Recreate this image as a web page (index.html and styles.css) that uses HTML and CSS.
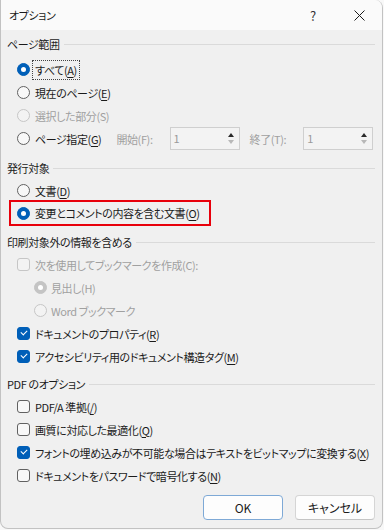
FILE: index.html
```html
<!DOCTYPE html>
<html lang="ja">

<head>
    <meta charset="UTF-8">
    <meta name="viewport" content="width=device-width, initial-scale=1.0">
    <title>オプション</title>
    <link rel="stylesheet" href="styles.css">
</head>

<body>
    <div class="window">
        <div class="titlebar">
            <span class="title">オプション</span>
            <span class="tb-btn help">?</span>
            <span class="tb-btn close">
                <svg width="11" height="11" viewBox="0 0 11 11">
                    <path d="M0.5 0.5 L10.5 10.5 M10.5 0.5 L0.5 10.5" stroke="#1b1b1b" stroke-width="1" fill="none" />
                </svg>
            </span>
        </div>

        <div class="content">
            <!-- page range -->
            <div class="group first">
                <div class="group-head">ページ範囲</div>
                <div class="row">
                    <span class="radio checked"></span>
                    <span class="txt focus">すべて(<u>A</u>)</span>
                </div>
                <div class="row">
                    <span class="radio"></span>
                    <span class="txt">現在のページ(<u>E</u>)</span>
                </div>
                <div class="row disabled">
                    <span class="radio"></span>
                    <span class="txt">選択した部分(S)</span>
                </div>
                <div class="row">
                    <span class="radio"></span>
                    <span class="txt">ページ指定(<u>G</u>)</span>
                    <span class="spin-label from">開始(F):</span>
                    <div class="spin">
                        <span class="spin-val">1</span>
                        <span class="spin-btns"><i class="up"></i><i class="down"></i></span>
                    </div>
                    <span class="spin-label to">終了(T):</span>
                    <div class="spin">
                        <span class="spin-val">1</span>
                        <span class="spin-btns"><i class="up"></i><i class="down"></i></span>
                    </div>
                </div>
            </div>

            <!-- publish what -->
            <div class="group">
                <div class="group-head">発行対象</div>
                <div class="row">
                    <span class="radio"></span>
                    <span class="txt">文書(<u>D</u>)</span>
                </div>
                <div class="row marked">
                    <span class="radio checked"></span>
                    <span class="txt">変更とコメントの内容を含む文書(<u>O</u>)</span>
                </div>
            </div>

            <!-- non printing info -->
            <div class="group">
                <div class="group-head">印刷対象外の情報を含める</div>
                <div class="row disabled">
                    <span class="check"></span>
                    <span class="txt">次を使用してブックマークを作成(C):</span>
                </div>
                <div class="row indent disabled">
                    <span class="radio checked"></span>
                    <span class="txt">見出し(H)</span>
                </div>
                <div class="row indent disabled">
                    <span class="radio"></span>
                    <span class="txt">Word ブックマーク</span>
                </div>
                <div class="row">
                    <span class="check checked"></span>
                    <span class="txt">ドキュメントのプロパティ(<u>R</u>)</span>
                </div>
                <div class="row">
                    <span class="check checked"></span>
                    <span class="txt">アクセシビリティ用のドキュメント構造タグ(<u>M</u>)</span>
                </div>
            </div>

            <!-- pdf options -->
            <div class="group pdf">
                <div class="group-head">PDF のオプション</div>
                <div class="row">
                    <span class="check"></span>
                    <span class="txt">PDF/A 準拠(<u>/</u>)</span>
                </div>
                <div class="row">
                    <span class="check"></span>
                    <span class="txt">画質に対応した最適化(<u>Q</u>)</span>
                </div>
                <div class="row">
                    <span class="check checked"></span>
                    <span class="txt">フォントの埋め込みが不可能な場合はテキストをビットマップに変換する(<u>X</u>)</span>
                </div>
                <div class="row">
                    <span class="check"></span>
                    <span class="txt">ドキュメントをパスワードで暗号化する(<u>N</u>)</span>
                </div>
            </div>
        </div>

        <div class="footer">
            <button class="btn default">OK</button>
            <button class="btn">キャンセル</button>
        </div>
    </div>
</body>

</html>
```

FILE: styles.css
```css
body {
    margin: 0;
    background-color: #f8f8f8;
    font-family: "Noto Sans CJK JP", "Noto Sans", sans-serif;
    font-size: 11px;
    letter-spacing: -0.4px;
    font-feature-settings: "palt";
    color: #1b1b1b;
}

.window {
    width: 383px;
    height: 529px;
    box-sizing: border-box;
    background: #f0f0f0;
    border: 1px solid #c2c2c2;
    border-top: none;
    border-radius: 0 8px 8px 8px;
    display: flex;
    flex-direction: column;
    overflow: hidden;
}

.titlebar {
    height: 30px;
    background: #fafafa;
    display: flex;
    align-items: center;
    padding-left: 8px;
}

.title {
    flex: 1;
}

.tb-btn {
    width: 46px;
    height: 30px;
    display: flex;
    align-items: center;
    justify-content: center;
}

.help {
    font-size: 13px;
    color: #333;
}

.content {
    padding: 0 6px 0 6px;
    flex: 1;
}

.group {
    margin-top: 7px;
}

.group.first {
    margin-top: 3px;
}

.group.first .group-head {
    margin-bottom: 3px;
}

.group.pdf {
    margin-top: 5px;
}

.group-head {
    height: 22px;
    display: flex;
    align-items: center;
    gap: 4px;
}

.group-head::after {
    content: "";
    flex: 1;
    height: 1px;
    background: #dadada;
    margin-right: 1px;
}

.row {
    height: 23px;
    display: flex;
    align-items: center;
    padding-left: 10px;
    white-space: nowrap;
}

.row.indent {
    padding-left: 27px;
}

.row.indent .radio {
    margin-right: 4px;
}

.row.disabled {
    color: #a0a0a0;
}

/* the red annotation box */
.row.marked {
    width: fit-content;
    height: 22px;
    margin-left: 4px;
    padding-left: 6px;
    padding-right: 9px;
    outline: 2px solid #e8000b;
}

.txt u {
    text-underline-offset: 2px;
}

.focus {
    outline: 1px dotted #444;
    outline-offset: 1px;
    padding: 0 1px;
    margin-left: -1px;
}

/* radio buttons */
.radio {
    width: 13px;
    height: 13px;
    box-sizing: border-box;
    border: 1px solid #616161;
    border-radius: 50%;
    margin-right: 5px;
    flex-shrink: 0;
    background: #f8f8f8;
    position: relative;
}

.radio.checked {
    background: #005fb8;
    border-color: #005fb8;
}

.radio.checked::after {
    content: "";
    position: absolute;
    width: 5px;
    height: 5px;
    left: 3px;
    top: 3px;
    border-radius: 50%;
    background: white;
}

.disabled .radio {
    border-color: #c6c6c6;
    background: #f3f3f3;
}

.disabled .radio.checked {
    background: #c4c4c4;
    border-color: #c4c4c4;
}

/* checkboxes */
.check {
    width: 13px;
    height: 13px;
    box-sizing: border-box;
    border: 1px solid #616161;
    border-radius: 3px;
    margin-right: 5px;
    flex-shrink: 0;
    background: #f8f8f8;
    position: relative;
}

.check.checked {
    background: #005fb8;
    border-color: #005fb8;
}

.check.checked::after {
    content: "";
    position: absolute;
    left: 3px;
    top: 2px;
    width: 5px;
    height: 3px;
    border-left: 1px solid white;
    border-bottom: 1px solid white;
    transform: rotate(-45deg);
}

.disabled .check {
    border-color: #c6c6c6;
    background: #f3f3f3;
}

/* spin boxes */
.spin-label {
    color: #a0a0a0;
}

.spin-label.from {
    margin-left: 15px;
    margin-right: 17px;
}

.spin-label.to {
    margin-left: 10px;
    margin-right: 17px;
}

.spin {
    width: 70px;
    height: 23px;
    box-sizing: border-box;
    border: 1px solid #cfcfcf;
    background: #f3f3f3;
    display: flex;
}

.spin-val {
    flex: 1;
    padding-left: 3px;
    line-height: 21px;
    color: #9a9a9a;
}

.spin-btns {
    width: 16px;
    display: flex;
    flex-direction: column;
    align-items: center;
    justify-content: space-around;
    padding: 3px 0;
}

.spin-btns i {
    width: 0;
    height: 0;
    border-left: 3.5px solid transparent;
    border-right: 3.5px solid transparent;
}

.spin-btns .up {
    border-bottom: 4px solid #2a2a2a;
}

.spin-btns .down {
    border-top: 4px solid #b8b8b8;
}

/* bottom buttons */
.footer {
    display: flex;
    justify-content: flex-end;
    gap: 12px;
    padding: 0 7px 8px 0;
}

.btn {
    width: 80px;
    height: 25px;
    box-sizing: border-box;
    font-family: inherit;
    font-size: 12px;
    font-feature-settings: "palt";
    color: #1b1b1b;
    background: #fdfdfd;
    border: 1px solid #d5d5d5;
    border-bottom-color: #c4c4c4;
    border-radius: 4px;
    padding: 0;
}

.btn.default {
    border: 1px solid #7ea9d6;
}
```
